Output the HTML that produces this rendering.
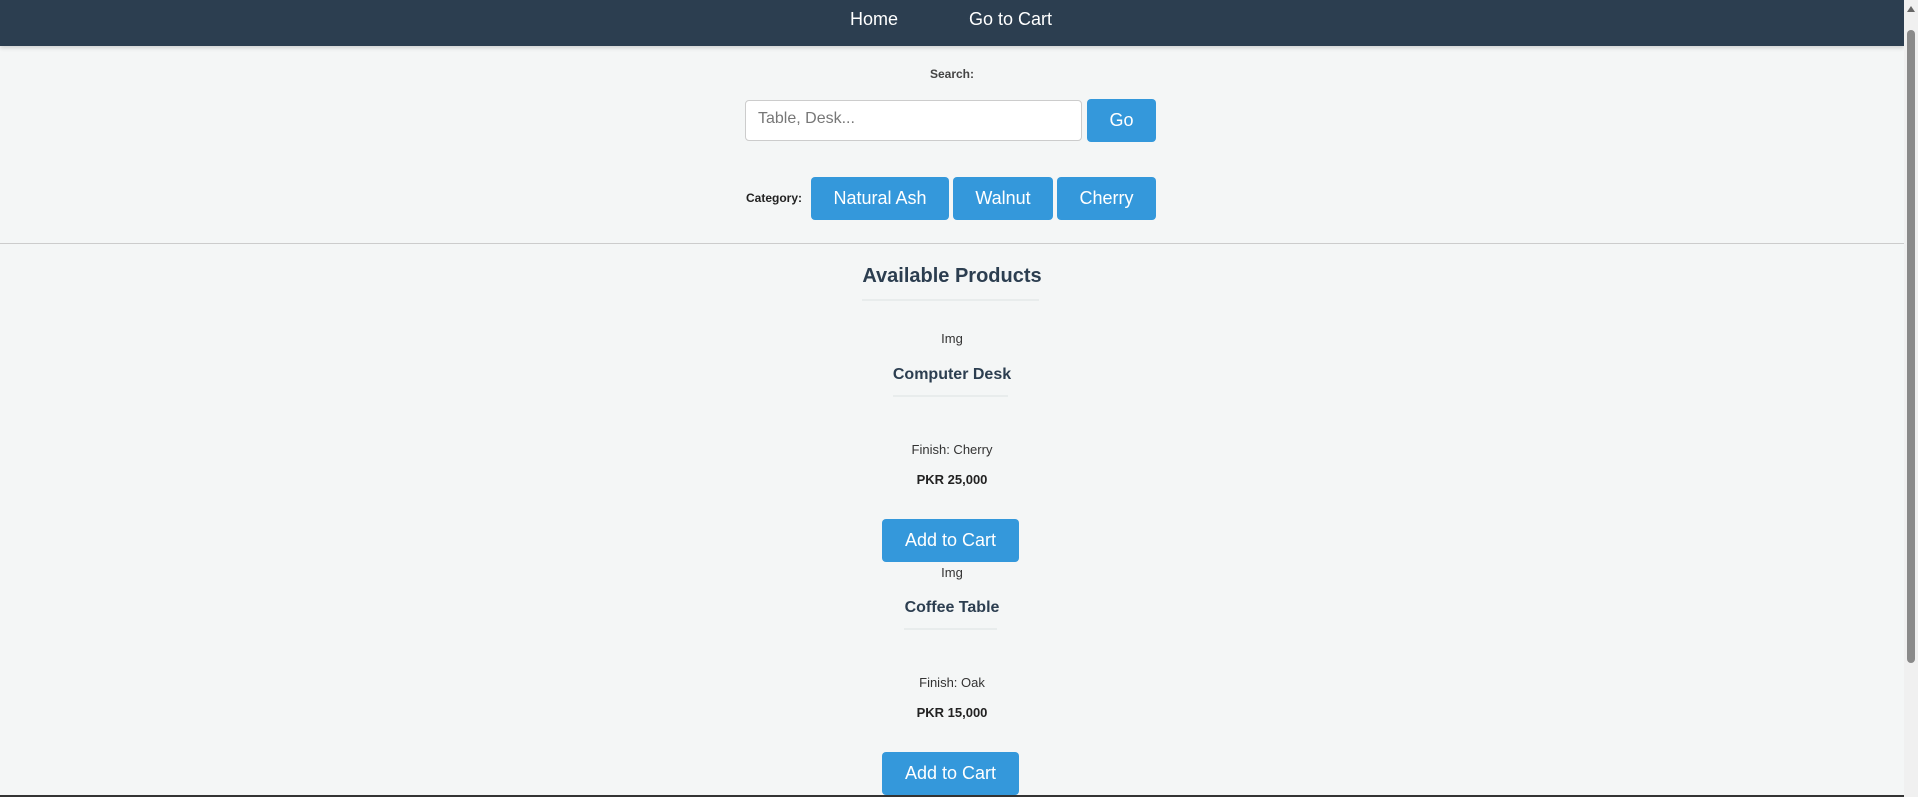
<!DOCTYPE html>
<html><head><style>
html,body{margin:0;padding:0;}
body{width:1918px;height:797px;background:#f4f6f6;font-family:"Liberation Sans",sans-serif;position:relative;overflow:hidden;color:#2c3e50;}
.a{position:absolute;}
nav{position:absolute;left:0;top:0;width:1904px;height:46px;background:#2c3e50;box-shadow:0 2px 4px rgba(0,0,0,.15);}
nav span{position:absolute;top:9px;color:#fff;font-size:18px;}
.btn{position:absolute;background:#3498db;color:#fff;border-radius:4px;font-size:18px;text-align:center;box-sizing:border-box;}
.c{left:0;width:1904px;text-align:center;}
.hr{position:absolute;height:2px;background:#e8ecec;}
</style></head><body>
<nav><span style="left:850px">Home</span><span style="left:969px">Go to Cart</span></nav>
<div class="a c" style="top:67px;font-size:12px;font-weight:bold;color:#444">Search:</div>
<div class="a" style="left:745px;top:100px;width:337px;height:41px;background:#fff;border:1px solid #ccc;border-radius:4px;box-sizing:border-box;"></div>
<div class="a" style="left:758px;top:110px;font-size:16px;color:#777">Table, Desk...</div>
<div class="btn" style="left:1087px;top:99px;width:69px;height:43px;line-height:43px">Go</div>
<div class="a" style="left:746px;top:191px;font-size:12px;font-weight:bold;color:#222">Category:</div>
<div class="btn" style="left:811px;top:177px;width:138px;height:43px;line-height:43px">Natural Ash</div>
<div class="btn" style="left:953px;top:177px;width:100px;height:43px;line-height:43px">Walnut</div>
<div class="btn" style="left:1057px;top:177px;width:99px;height:43px;line-height:43px">Cherry</div>
<div class="a" style="left:0;top:243px;width:1904px;height:1px;background:#ccc"></div>
<div class="a c" style="top:265px;font-size:20px;font-weight:bold">Available Products</div>
<div class="hr" style="left:862px;top:299px;width:177px"></div>

<div class="a c" style="top:331px;font-size:13px;color:#333">Img</div>
<div class="a c" style="top:366px;font-size:16px;font-weight:bold">Computer Desk</div>
<div class="hr" style="left:893px;top:395px;width:115px"></div>
<div class="a c" style="top:442px;font-size:13px;color:#333">Finish: Cherry</div>
<div class="a c" style="top:472px;font-size:13px;font-weight:bold;color:#222">PKR 25,000</div>
<div class="btn" style="left:882px;top:519px;width:137px;height:43px;line-height:43px">Add to Cart</div>

<div class="a c" style="top:565px;font-size:13px;color:#333">Img</div>
<div class="a c" style="top:599px;font-size:16px;font-weight:bold">Coffee Table</div>
<div class="hr" style="left:904px;top:628px;width:93px"></div>
<div class="a c" style="top:675px;font-size:13px;color:#333">Finish: Oak</div>
<div class="a c" style="top:705px;font-size:13px;font-weight:bold;color:#222">PKR 15,000</div>
<div class="btn" style="left:882px;top:752px;width:137px;height:43px;line-height:43px">Add to Cart</div>

<div class="a" style="left:0;top:795px;width:1904px;height:2px;background:#333"></div>
<div class="a" style="left:1904px;top:0;width:14px;height:797px;background:#f0f0f0"></div>
<div class="a" style="left:1907px;top:30px;width:8px;height:633px;background:#8a8a8a;border-radius:4px"></div>
<div class="a" style="left:1907px;top:6px;width:0;height:0;border-left:4px solid transparent;border-right:4px solid transparent;border-bottom:6px solid #666"></div>
</body></html>
